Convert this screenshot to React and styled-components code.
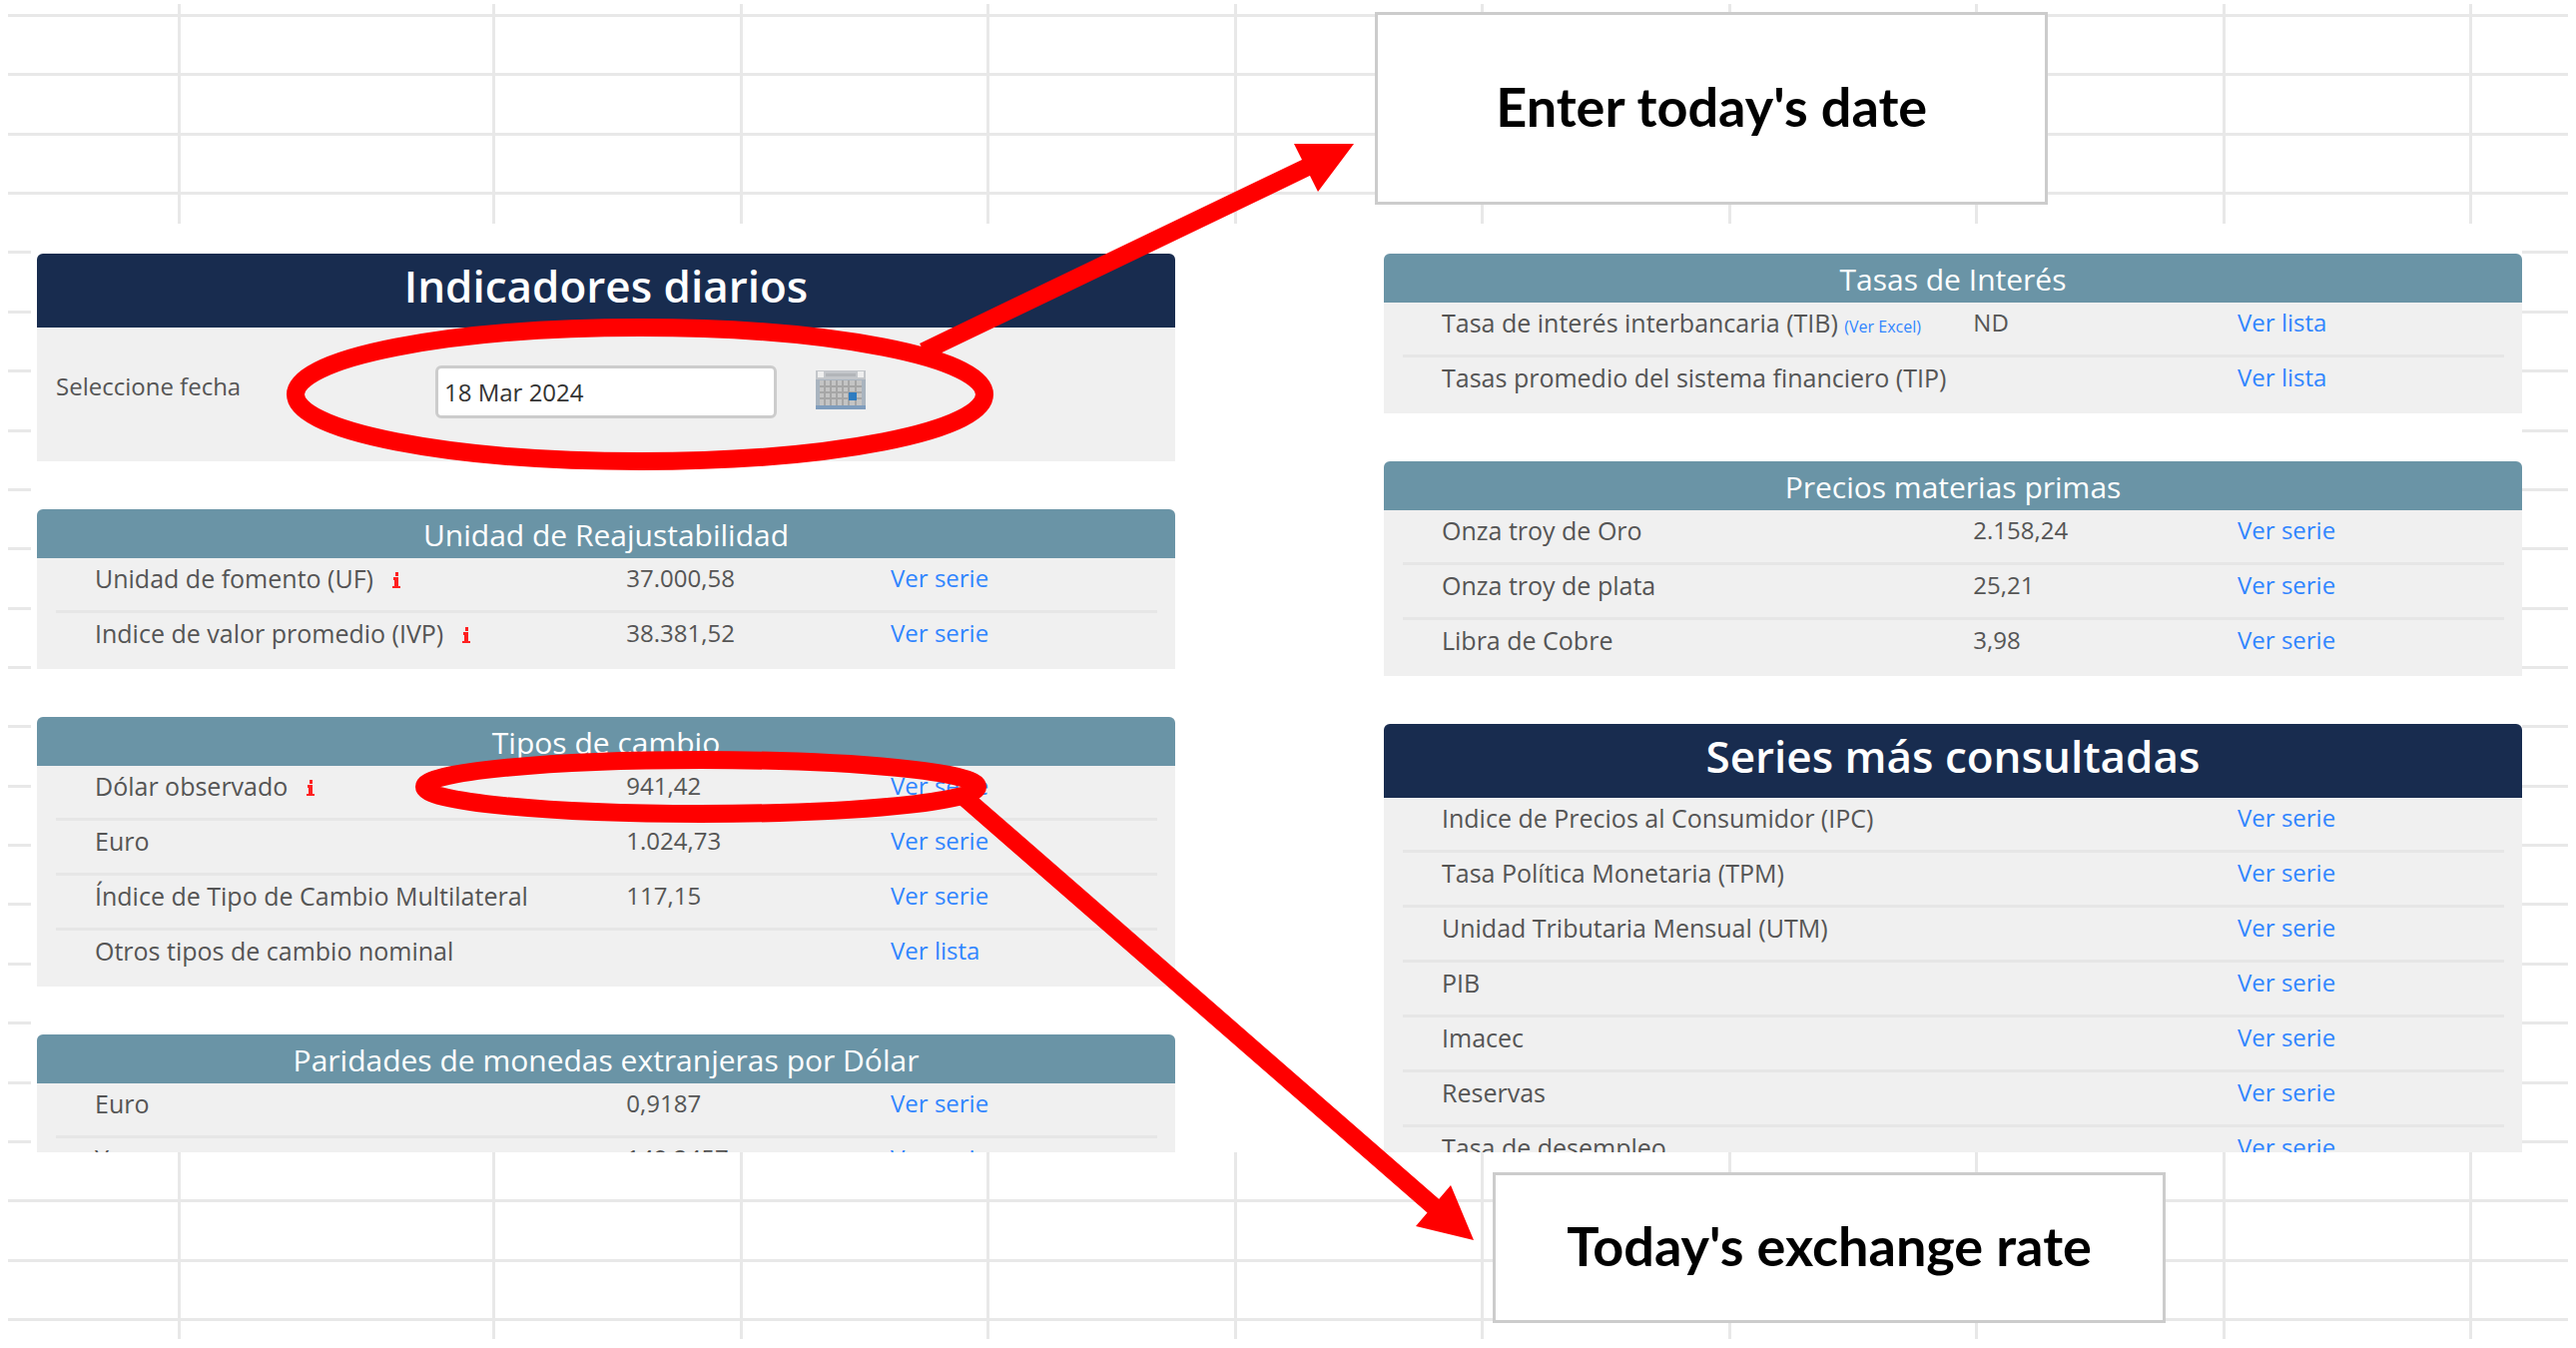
import React from 'react';
import styled, { createGlobalStyle } from 'styled-components';

const GlobalStyle = createGlobalStyle`
	* {
		box-sizing: border-box;
	}
	body {
		margin: 0;
		background: #ffffff;
		font-family: "Open Sans", "Noto Sans", sans-serif;
		font-size: 24px;
		color: #555555;
	}
`

const Page = styled.main`
	position: relative;
	padding: 4px 8px 10px;
`

// spreadsheet cells behind everything
const Sheet = styled.div`
	position: absolute;
	inset: 4px 8px 10px;
	display: grid;
	grid-template-columns: 173px 315px repeat(8, 1fr) 96px;
	grid-template-rows: 13px repeat(22, 1fr) 18px;
`

const Cell = styled.i`
	border-right: ${({ $last }) => ($last ? 'none' : '3px solid #e8e8e8')};
	border-bottom: ${({ $bottom }) => ($bottom ? 'none' : '3px solid #e8e8e8')};
`

const Band = styled.div`
	position: relative;
	display: flex;
	padding: ${({ $low }) => ($low ? '20px 0 16px 58%' : '8px 0 19px 53.4%')};
`

const Callout = styled.p`
	margin: 0;
	width: 674px;
	display: flex;
	align-items: center;
	justify-content: center;
	padding-bottom: 4px;
	height: ${({ $tall }) => ($tall ? '193px' : '151px')};
	background: #ffffff;
	border: 3px solid #cccccc;
	font-family: Lato, sans-serif;
	font-weight: 700;
	font-size: 54px;
	line-height: 60px;
	color: #000000;
`

const Capture = styled.div`
	position: relative;
	margin: 0 46px 0 23px;
	padding: 30px 0 0 6px;
	max-height: 930px;
	overflow: hidden;
	background: #ffffff;
	display: grid;
	grid-template-columns: 1fr 1fr;
	column-gap: 209px;
`

const Column = styled.div`
	display: flex;
	flex-direction: column;
	gap: 48px;
`

const Panel = styled.section`
	background: #f0f0f0;
	border-radius: 6px 6px 0 0;
	padding-bottom: 1px;
`

const Title = styled.h2`
	margin: 0;
	height: 49px;
	border-radius: 6px 6px 0 0;
	background: #6a94a6;
	color: #ffffff;
	text-align: center;
	font-weight: 400;
	font-size: 30px;
	line-height: 52px;
`

const MainTitle = styled(Title)`
	height: 74px;
	background: #182c4f;
	font-weight: 600;
	font-size: 44px;
	line-height: 64px;
`

const Table = styled.table`
	width: calc(100% - 37px);
	margin: 0 18px 0 19px;
	table-layout: fixed;
	border-collapse: separate;
	border-spacing: 0;
	tr:last-child td{
		border-bottom: none;
	}
`

const Td = styled.td`
	width: ${({ $w }) => $w};
	height: 55px;
	padding: 0;
	border-bottom: 3px solid #e6e6e6;
	line-height: 40px;
	vertical-align: top;
	white-space: nowrap;
`

const NameTd = styled(Td)`
	padding-left: 39px;
	font-size: 25px;
`

const Link = styled.a`
	color: #3085ff;
	text-decoration: none;
`

const SmallLink = styled(Link)`
	font-size: 16px;
`

const InfoIcon = styled.svg`
	width: 8px;
	height: 16px;
	margin-left: 19px;
`

const DateForm = styled.form`
	height: 133px;
	padding: 38px 19px 0;
	display: flex;
	align-items: flex-start;
	label{
		width: 380px;
		line-height: 42px;
	}
`

const DateInput = styled.input`
	width: 342px;
	height: 53px;
	padding: 0 6px;
	border: 3px solid #cccccc;
	border-radius: 6px;
	background: #ffffff;
	font: inherit;
	color: #333333;
`

const CalendarButton = styled.button`
	margin: 4px 0 0 38px;
	padding: 0;
	border: none;
	background: none;
	line-height: 0;
`

const Marks = styled.svg`
	position: absolute;
	left: 0;
	top: 0;
	width: 100%;
	pointer-events: none;
`

const unidad = [
	{ name: 'Unidad de fomento (UF)', info: true, value: '37.000,58', link: 'Ver serie' },
	{ name: 'Indice de valor promedio (IVP)', info: true, value: '38.381,52', link: 'Ver serie' },
]

const cambio = [
	{ name: 'Dólar observado', info: true, value: '941,42', link: 'Ver serie' },
	{ name: 'Euro', value: '1.024,73', link: 'Ver serie' },
	{ name: 'Índice de Tipo de Cambio Multilateral', value: '117,15', link: 'Ver serie' },
	{ name: 'Otros tipos de cambio nominal', link: 'Ver lista' },
]

const paridades = [
	{ name: 'Euro', value: '0,9187', link: 'Ver serie' },
	{ name: 'Yen', value: '149,2457', link: 'Ver serie' },
]

const tasas = [
	{ name: 'Tasa de interés interbancaria (TIB)', excel: true, value: 'ND', link: 'Ver lista' },
	{ name: 'Tasas promedio del sistema financiero (TIP)', link: 'Ver lista' },
]

const materias = [
	{ name: 'Onza troy de Oro', value: '2.158,24', link: 'Ver serie' },
	{ name: 'Onza troy de plata', value: '25,21', link: 'Ver serie' },
	{ name: 'Libra de Cobre', value: '3,98', link: 'Ver serie' },
]

const series = [
	'Indice de Precios al Consumidor (IPC)',
	'Tasa Política Monetaria (TPM)',
	'Unidad Tributaria Mensual (UTM)',
	'PIB',
	'Imacec',
	'Reservas',
	'Tasa de desempleo',
].map((name) => ({ name, link: 'Ver serie' }))

const Info = () => (
	<InfoIcon viewBox="0 0 8 16" aria-hidden="true">
		<path d="M3 0h3v4H3zM1 5h5v9h2v2H0v-2h2V8H1z" fill="#ff2020" />
	</InfoIcon>
)

const Calendar = () => (
	<svg width="52" height="41" viewBox="0 0 52 41" aria-hidden="true">
		<rect x="1" y="1" width="50" height="39" fill="#a9b4bf" />
		<rect x="1" y="1" width="50" height="9" fill="#c3c6ca" />
		<rect x="3" y="2" width="6" height="6" fill="#eeeeee" />
		<rect x="43" y="2" width="6" height="6" fill="#eeeeee" />
		<rect x="11" y="4" width="30" height="3" fill="#b2b5b9" />
		<rect x="5" y="11" width="42" height="25" fill="#c4c4c4" />
		<path d="M5 17h42M5 23h42M5 29h42M10 11v25M16 11v25M22 11v25M28 11v25M34 11v25M41 11v25" stroke="#a6a6a6" strokeWidth="2" />
		<rect x="1" y="36" width="50" height="4" fill="#7f9dbd" />
		<rect x="34" y="23" width="8" height="8" fill="#2f7cc0" />
	</svg>
)

const Indicators = ({ rows }) => (
	<Table>
		<tbody>
			{rows.map((row) => (
				<tr key={row.name}>
					<NameTd $w="51.8%">
						{row.name}
						{row.info && <Info />}
						{row.excel && <> <SmallLink href="#">(Ver Excel)</SmallLink></>}
					</NameTd>
					<Td $w="24%">{row.value}</Td>
					<Td $w="24.2%"><Link href="#">{row.link}</Link></Td>
				</tr>
			))}
		</tbody>
	</Table>
)

const COLS = 11
const ROWS = 24

const App = () => {
	return (
		<>
			<GlobalStyle />
			<Page>
				<Sheet aria-hidden="true">
					{Array.from({ length: COLS * ROWS }, (_, i) => (
						<Cell key={i} $last={i % COLS === COLS - 1} $bottom={i >= COLS * (ROWS - 1)} />
					))}
				</Sheet>
				<Band>
					<Callout $tall>Enter today's date</Callout>
				</Band>
				<Capture>
					<Column>
						<Panel>
							<MainTitle>Indicadores diarios</MainTitle>
							<DateForm>
								<label htmlFor="fecha">Seleccione fecha</label>
								<DateInput id="fecha" type="text" defaultValue="18 Mar 2024" />
								<CalendarButton type="button" aria-label="Calendario"><Calendar /></CalendarButton>
							</DateForm>
						</Panel>
						<Panel>
							<Title>Unidad de Reajustabilidad</Title>
							<Indicators rows={unidad} />
						</Panel>
						<Panel>
							<Title>Tipos de cambio</Title>
							<Indicators rows={cambio} />
						</Panel>
						<Panel>
							<Title>Paridades de monedas extranjeras por Dólar</Title>
							<Indicators rows={paridades} />
						</Panel>
					</Column>
					<Column>
						<Panel>
							<Title>Tasas de Interés</Title>
							<Indicators rows={tasas} />
						</Panel>
						<Panel>
							<Title>Precios materias primas</Title>
							<Indicators rows={materias} />
						</Panel>
						<Panel>
							<MainTitle>Series más consultadas</MainTitle>
							<Indicators rows={series} />
						</Panel>
					</Column>
				</Capture>
				<Band $low>
					<Callout>Today's exchange rate</Callout>
				</Band>
				<Marks viewBox="0 0 2580 1350" aria-hidden="true">
					<g fill="none" stroke="#ff0000" strokeWidth="18">
						<ellipse cx="641" cy="395" rx="345" ry="67" />
						<ellipse cx="702" cy="788" rx="277" ry="27" />
						<path d="M925 352L1312 166M964 797L1438 1210" />
					</g>
					<path d="M1356 144L1296 144L1320 192zM1476 1242L1453 1187L1418 1228z" fill="#ff0000" />
				</Marks>
			</Page>
		</>
	)
}

export default App;
